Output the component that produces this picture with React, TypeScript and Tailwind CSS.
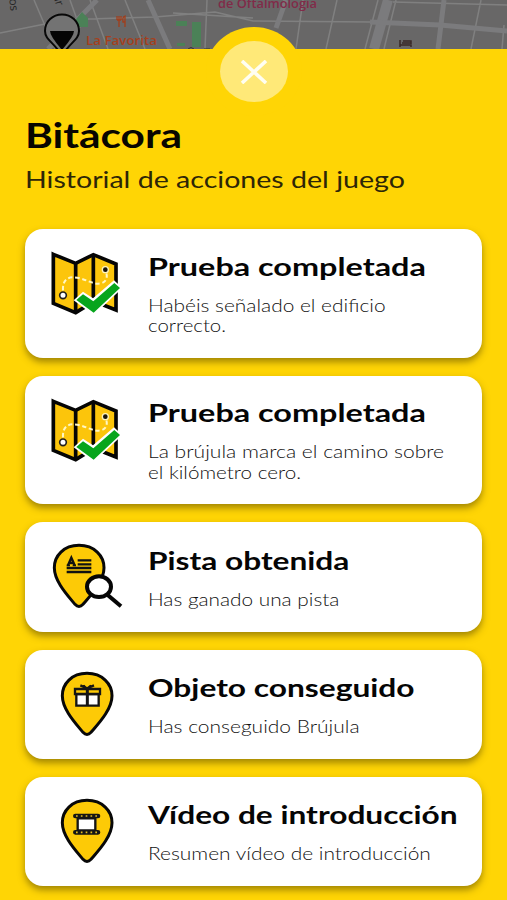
import { useLayoutEffect, useRef, useState, type ReactNode } from 'react';

/** One line of text, widened horizontally to the given width. */
function Line({ width, className, children }: { width: number; className: string; children: string }) {
  const ref = useRef<HTMLSpanElement>(null);
  const [scale, setScale] = useState(1);
  useLayoutEffect(() => {
    if (ref.current) setScale(width / ref.current.offsetWidth);
  }, [width]);
  return (
    <div className={className}>
      <span ref={ref} className="inline-block origin-left whitespace-nowrap" style={{ transform: `scaleX(${scale})` }}>
        {children}
      </span>
    </div>
  );
}

function MapIcon() {
  return (
    <svg viewBox="0 0 270 255" className="h-[85px] w-[90px]" fill="none">
      <path d="M40 43 107 70 160 44 228 72V210L162 184 107 218 40 190Z" fill="#fcc50b" stroke="#050505" strokeWidth="11" />
      <path d="M107 68V218M160 42V184" stroke="#050505" strokeWidth="11" />
      <path d="M69 151C67 121 82 108 112 113C145 120 160 135 184 130C201 125 202 108 199 99" stroke="#fff7c5" strokeWidth="6" strokeDasharray="13 8" />
      <circle cx="69" cy="166" r="10" fill="#fff" stroke="#24211c" strokeWidth="5" />
      <circle cx="196" cy="89" r="9" fill="#17130b" stroke="#fff5bd" strokeWidth="4" />
      <path d="M101 181 129 155 159 175 222 121 247 144 161 226Z" fill="#fff" />
      <path d="M109 180 129 163 160 184 223 129 240 144 161 218Z" fill="#07a51d" />
    </svg>
  );
}

function Pin({ children, x = 0 }: { children: ReactNode; x?: number }) {
  return (
    <svg viewBox="0 0 270 255" className="h-[85px] w-[90px]" fill="none">
      <path
        transform={`translate(${x} 0)`}
        d="M141 34C95 34 67 66 67 101C67 142 107 184 129 211Q141 224 153 211C176 184 216 142 216 101C216 66 187 34 141 34Z"
        fill="#fdca06"
        stroke="#080808"
        strokeWidth="9"
      />
      {children}
    </svg>
  );
}

function ClueIcon() {
  return (
    <Pin x={-24}>
      <path d="M84 94 94 71 104 94M88 87H100" stroke="#111" strokeWidth="7" />
      <path d="M80 94H90M98 94H108" stroke="#111" strokeWidth="5" />
      <path d="M113 79H154M113 91H154M80 102H154M80 114H154" stroke="#111" strokeWidth="7" />
      <path d="M203 183 243 217" stroke="#050505" strokeWidth="12" />
      <ellipse cx="177" cy="158" rx="36" ry="31" fill="#fff" stroke="#050505" strokeWidth="12" />
    </Pin>
  );
}

function GiftIcon() {
  return (
    <Pin>
      <path d="M109 96H176V131H109Z" fill="#fff" stroke="#151515" strokeWidth="7" />
      <path d="M105 81H180V96H105Z" fill="#fdca06" stroke="#151515" strokeWidth="7" />
      <path d="M142 80V132" stroke="#151515" strokeWidth="9" />
      <path d="M141 79 121 70M141 79 162 70M130 71 141 80 153 71" stroke="#151515" strokeWidth="7" />
    </Pin>
  );
}

function FilmIcon() {
  return (
    <Pin>
      <path d="M113 88H166V124H113Z" fill="#fff" stroke="#151515" strokeWidth="7" />
      <path d="M106 81H174M106 130H174" stroke="#151515" strokeWidth="14" strokeLinecap="round" />
      <path d="M108 81H176M108 130H176" stroke="#e6bc20" strokeWidth="5" strokeDasharray="5 9.5" />
    </Pin>
  );
}

type Entry = {
  icon: ReactNode;
  title: string;
  titleWidth: number;
  lines: { text: string; width: number }[];
  box: string;
};

const entries: Entry[] = [
  {
    icon: <MapIcon />,
    title: 'Prueba completada',
    titleWidth: 278,
    lines: [{ text: 'Habéis señalado el edificio', width: 237 }, { text: 'correcto.', width: 78 }],
    box: 'h-[128.5px] pt-[11px]',
  },
  {
    icon: <MapIcon />,
    title: 'Prueba completada',
    titleWidth: 278,
    lines: [{ text: 'La brújula marca el camino sobre', width: 296 }, { text: 'el kilómetro cero.', width: 153 }],
    box: 'h-[128.5px] pt-[11px]',
  },
  {
    icon: <ClueIcon />,
    title: 'Pista obtenida',
    titleWidth: 201,
    lines: [{ text: 'Has ganado una pista', width: 192 }],
    box: 'h-[109.5px] pt-[12px]',
  },
  {
    icon: <GiftIcon />,
    title: 'Objeto conseguido',
    titleWidth: 266,
    lines: [{ text: 'Has conseguido Brújula', width: 212 }],
    box: 'h-[109px] pt-[12px]',
  },
  {
    icon: <FilmIcon />,
    title: 'Vídeo de introducción',
    titleWidth: 309,
    lines: [{ text: 'Resumen vídeo de introducción', width: 283 }],
    box: 'h-[109px] pt-[12px]',
  },
];

function Card({ entry }: { entry: Entry }) {
  return (
    <article className={`flex items-start rounded-[18px] bg-white pl-[15px] shadow-[0_4px_7px_rgba(70,55,0,0.5)] ${entry.box}`}>
      <div className="shrink-0">{entry.icon}</div>
      <div className="ml-[17.5px] pt-[10.5px]">
        <Line width={entry.titleWidth} className="h-[30px] text-[25.5px] leading-[30px] font-bold text-[#050505]">
          {entry.title}
        </Line>
        <div className="pt-[15px]">
          {entry.lines.map((line) => (
            <Line key={line.text} width={line.width} className="h-[20.5px] text-[17px] leading-[20.5px] font-light text-[#111]">
              {line.text}
            </Line>
          ))}
        </div>
      </div>
    </article>
  );
}

function StreetMap() {
  return (
    <svg viewBox="0 0 507 49" className="h-[49px] w-full" fill="none" fontFamily="'Open Sans', sans-serif">
      <path d="M0 0H507V49H0Z" fill="#686767" />
      <path d="M34 0 55 49M70 0 80 28M0 33 45 24 88 19 155 17 215 12 253 21 372 22M90 0 108 49M125 0 145 49M207 0 205 49M173 13 253 18M303 0 296 49M337 0 326 49M378 0 365 49M393 2 507 5M396 0 384 49M481 0 471 49M504 25 502 49" stroke="#808080" strokeWidth="1.5" />
      <path d="M148 0 170 49M97 0 70 27 48 49M286 0 276 28M444 0 438 49" stroke="#7b7b7d" strokeWidth="5" />
      <path d="M388 0 374 49" stroke="#7b7b7d" strokeWidth="10" />
      <path d="M370 22 440 25 507 31" stroke="#7b7b7d" strokeWidth="5" />
      <path d="M72 24 82 12 88 18V27H72ZM176 21H187V26H176ZM192 22H201V47H192ZM177 43H185V46H177Z" fill="#4b8157" />
      <g stroke="#a13e1b" strokeWidth="1.3">
        <path d="M117 16V20M119 16V27M121 16V20M117 20H121M125 27V16Q122 17 123 22H125" />
      </g>
      <text x="86" y="44.5" fontSize="12.5" fontWeight="600" fill="#a5401d" textLength="71" lengthAdjust="spacingAndGlyphs">La Favorita</text>
      <text x="218" y="8" fontSize="12" fontWeight="600" fill="#812b49" textLength="99" lengthAdjust="spacingAndGlyphs">de Oftalmología</text>
      <text transform="translate(9 -4) rotate(84)" fontSize="11.5" fill="#242424">los</text>
      <text transform="translate(53 -4) rotate(72)" fontSize="11.5" fill="#242424">ar</text>
      <path d="M188 49Q191 46 194 49M204 49H210" stroke="#333" />
      <path d="M400 40V47M400 45H411V47M402 43H411M403 41H411V44" stroke="#392a28" strokeWidth="1.5" />
      <path d="M62 56C55 43 45 40 45 31C45 21 53 14.5 62 14.5S79 21 79 31C79 40 69 43 62 56Z" fill="#737373" stroke="#080808" strokeWidth="2" />
      <path d="M50 31H74Q74 36 62 50Q50 36 50 31Z" fill="#050505" />
    </svg>
  );
}

export default function App() {
  return (
    <div className="h-[900px] w-[507px] overflow-hidden bg-[#ffd505] font-['Lato',sans-serif]">
      <header className="relative h-[49px]">
        <StreetMap />
        <button
          aria-label="Cerrar"
          className="absolute top-[27px] left-[206px] flex h-[89px] w-[96px] items-center justify-center rounded-[50%] bg-[#ffd505]"
        >
          <span className="flex h-[61px] w-[68px] items-center justify-center rounded-[50%] bg-[#ffe978]">
            <svg viewBox="0 0 28 24" className="h-6 w-7" fill="none">
              <path d="M2 1 26 23M26 1 2 23" stroke="#fffef2" strokeWidth="3.6" />
            </svg>
          </span>
        </button>
      </header>
      <main className="px-[25px]">
        <div className="h-[180px] pt-[66px] pl-px">
          <h1>
            <Line width={157} className="-ml-px h-10 text-[34px] leading-10 font-bold text-[#080600]">
              Bitácora
            </Line>
          </h1>
          <h2 className="pt-[10px]">
            <Line width={380} className="-ml-px h-7 text-[23px] leading-7 text-[#2d2607]">
              Historial de acciones del juego
            </Line>
          </h2>
        </div>
        <div className="flex flex-col gap-[18px]">
          {entries.map((entry, index) => (
            <Card key={index} entry={entry} />
          ))}
        </div>
      </main>
    </div>
  );
}
